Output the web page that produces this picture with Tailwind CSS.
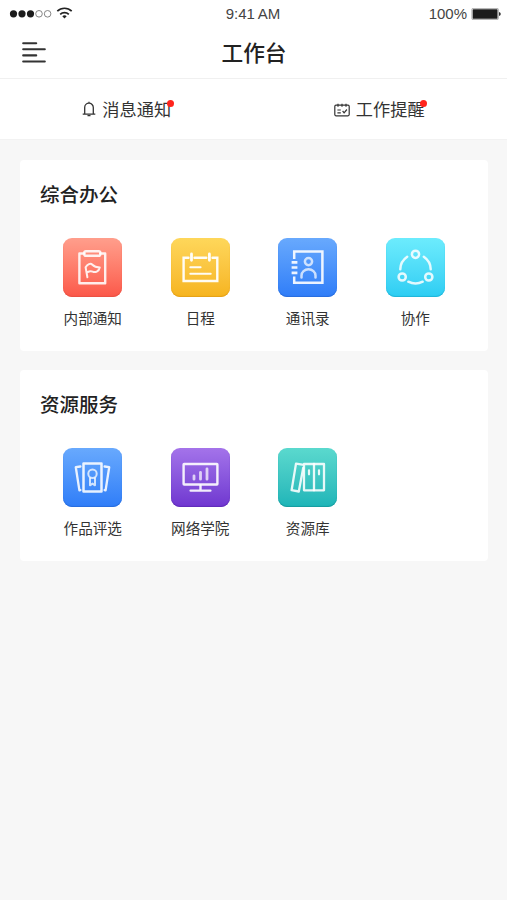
<!DOCTYPE html>
<html lang="zh-CN">
<head>
<meta charset="utf-8">
<meta name="viewport" content="width=device-width, initial-scale=1">
<title>工作台</title>
<script src="https://cdn.jsdelivr.net/npm/@tailwindcss/browser@4"></script>
</head>
<body class="min-h-screen bg-[#f7f7f7] font-['Liberation_Sans','Noto_Sans_CJK_SC',sans-serif] text-[#333]">
<header class="bg-white border-b border-[#f0f0f0] h-[79px]">
  <div class="h-7 grid grid-cols-3 items-center pl-[9px] pr-[6px] text-[15px] leading-7 text-[#444]">
    <div class="flex items-center">
      <svg class="w-[66px] h-4" viewBox="0 0 66 16" fill="none">
        <g fill="#1c1c1c"><circle cx="4.5" cy="7.8" r="3.6"/><circle cx="13" cy="7.8" r="3.6"/><circle cx="21.5" cy="7.8" r="3.6"/></g>
        <g stroke="#777" stroke-width=".9"><circle cx="30" cy="7.8" r="3.3"/><circle cx="38.6" cy="7.8" r="3.3"/></g>
        <g stroke="#222" stroke-width="1.7"><path d="M48.3 5.2a10.3 10.3 0 0 1 14.4 0"/><path d="M51.2 8.4a6.2 6.2 0 0 1 8.6 0"/></g>
        <path d="M53.3 10.3a3.2 3.2 0 0 1 4.4 0L55.5 12.5Z" fill="#222"/>
      </svg>
    </div>
    <div class="text-center tracking-[-0.1px] pr-1">9:41 AM</div>
    <div class="flex items-center justify-end gap-1">
      <span>100%</span>
      <svg class="w-[30px] h-3" viewBox="0 0 30 12"><rect x=".9" y=".4" width="26.4" height="11.2" rx="1" fill="#fff" stroke="#999" stroke-width=".8"/><rect x="1.7" y="1.2" width="24.8" height="9.6" rx=".6" fill="#1c1c1c"/><path d="M28 4.1q1.8.4 1.8 1.9T28 7.9Z" fill="#333"/></svg>
    </div>
  </div>
  <div class="h-[50px] grid grid-cols-[1fr_auto_1fr] items-center pl-[21px] pr-[20px]">
    <svg class="w-6 h-[22px] ml-px" viewBox="0 0 24 22" stroke="#333" stroke-width="2.1" stroke-linecap="round"><path d="M1.2 1.2H14.2M1.2 7.3H22.8M1.2 13.4H14.2M1.2 19.5H22.8"/></svg>
    <h1 class="pt-[2px] text-[21.7px] font-medium leading-[30px] text-[#222]">工作台</h1>
  </div>
</header>

<nav class="bg-white h-[61px] border-b border-[#f2f2f2] grid grid-cols-2 items-center text-[17.2px] leading-6">
  <a class="flex items-center justify-center gap-[6px]">
    <svg class="w-[14px] h-4" viewBox="0 0 14 16" fill="none" stroke="#333" stroke-width="1.3"><path d="M2.7 13V6.5a4.3 4.3 0 0 1 8.6 0V13M.7 13.1H13.3M7 2.1V.7M5.5 14.7h3"/></svg>
    <span class="relative pt-[2px]">消息通知<i class="absolute -right-[3px] top-[4px] size-[7px] rounded-full bg-[#ff241c]"></i></span>
  </a>
  <a class="flex items-center justify-center gap-[6px] pr-[2px]">
    <svg class="w-4 h-[14px] mt-px" viewBox="0 0 16 14" fill="none" stroke="#333" stroke-width="1.2"><rect x=".8" y="2.2" width="14.4" height="10.6" rx="1.2"/><path d="M4 .7v3M8 .7v3M12 .7v3M3.4 7h3.4M3.4 9.8h3.4M8.6 8l1.5 1.8 2.8-3.3"/></svg>
    <span class="relative pt-[2px]">工作提醒<i class="absolute -right-[2px] top-[4px] size-[7px] rounded-full bg-[#ff241c]"></i></span>
  </a>
</nav>

<main class="pl-5 pt-5 pr-[19px] flex flex-col gap-[19px]">
  <section class="bg-white rounded-[4px] h-[191px] px-[19px] pt-5">
    <h2 class="pl-[1px] text-[19.5px] font-medium leading-[30px] text-[#222]">综合办公</h2>
    <div class="grid grid-cols-4 mt-7 text-[14.6px] leading-[22px]">
      <a class="flex flex-col items-center gap-[11px]">
        <span class="size-[59px] rounded-[9px] bg-linear-to-b from-[#ff9e8c] to-[#fb5749] shadow-[inset_0_-1px_1px_#e95243]">
          <svg class="size-full" viewBox="0 0 59 59" fill="none" stroke="#fff" stroke-opacity=".88" stroke-width="2.4" stroke-linejoin="round" stroke-linecap="round"><path d="M21.2 15.5H16.4V45.2H42.2V15.5H37.5"/><rect x="21.3" y="13.2" width="16" height="4.6" rx="1.6"/><path d="M24.4 39.2 22.6 29.2C24.5 26.4 27.4 24.7 29.4 26.8S33.8 29.4 36.8 29.4C36 33.8 32 34.8 29.6 33.6S25.8 33.4 23.6 34.6" stroke-width="2"/></svg>
        </span>内部通知
      </a>
      <a class="flex flex-col items-center gap-[11px]">
        <span class="size-[59px] rounded-[9px] bg-linear-to-b from-[#fed75a] to-[#f6b41d] shadow-[inset_0_-1px_1px_#e5a018]">
          <svg class="size-full" viewBox="0 0 59 59" fill="none" stroke="#fff" stroke-opacity=".95" stroke-width="2.4" stroke-linecap="round"><path d="M17.5 19.8H12.6V43H46.3V19.8H41.5M23.5 19.8H35.3"/><path d="M20.5 16V22.3M38.4 16V22.3" stroke-width="2.8"/><path d="M19.3 29.3H29.6M19.3 35.7H39.7" stroke-width="2"/></svg>
        </span>日程
      </a>
      <a class="flex flex-col items-center gap-[11px]">
        <span class="size-[59px] rounded-[9px] bg-linear-to-b from-[#68a9fd] to-[#2f7df8] shadow-[inset_0_-1px_1px_#286ddd]">
          <svg class="size-full" viewBox="0 0 59 59" fill="none" stroke="#fff" stroke-opacity=".9" stroke-width="2.5"><path d="M16.2 21V13.5H44.4V44.8H16.2V38.5"/><path d="M13.6 24.3H19.4M13.6 29.5H19.4M13.6 34.8H19.4" stroke-width="2.7"/><g stroke-opacity=".72"><circle cx="30.5" cy="23.6" r="3.6"/><path d="M23.5 39.5V37.5a7 6.2 0 0 1 14 0V39.5" stroke-linecap="round"/></g></svg>
        </span>通讯录
      </a>
      <a class="flex flex-col items-center gap-[11px]">
        <span class="size-[59px] rounded-[9px] bg-linear-to-b from-[#6cecfd] to-[#2bcdf3] shadow-[inset_0_-1px_1px_#20b5d8]">
          <svg class="size-full" viewBox="0 0 59 59" fill="none" stroke="#fff" stroke-opacity=".85" stroke-width="2.5" stroke-linecap="round"><circle cx="29.5" cy="16.3" r="3.6"/><circle cx="16.2" cy="39" r="3.6"/><circle cx="42.8" cy="39" r="3.6"/><path d="M21.2 18.8Q14.5 23.4 14.3 31.2M37.8 18.8Q44.5 23.4 44.7 31.2M22.3 43.7Q29.5 47.2 36.7 43.7"/></svg>
        </span>协作
      </a>
    </div>
  </section>

  <section class="bg-white rounded-[4px] h-[191px] px-[19px] pt-5">
    <h2 class="pl-[1px] text-[19.5px] font-medium leading-[30px] text-[#222]">资源服务</h2>
    <div class="grid grid-cols-4 mt-7 text-[14.6px] leading-[22px]">
      <a class="flex flex-col items-center gap-[11px]">
        <span class="size-[59px] rounded-[9px] bg-linear-to-b from-[#68a9fd] to-[#2f7df8] shadow-[inset_0_-1px_1px_#286ddd]">
          <svg class="size-full" viewBox="0 0 59 59" fill="none" stroke="#fff" stroke-opacity=".88" stroke-width="2.3" stroke-linejoin="round" stroke-linecap="round"><rect x="20.5" y="15.5" width="18" height="28" stroke-width="2.5"/><path d="M17.4 18.5 12.8 19.2 16.4 42.3 17.4 42.1M41.6 18.5 46.2 19.2 42.6 42.3 41.6 42.1"/><g stroke-width="2" stroke-opacity=".75"><circle cx="29.5" cy="25.8" r="4.2"/><path d="M27 30.2V37.3L29.5 35.6 32 37.3V30.2"/></g></svg>
        </span>作品评选
      </a>
      <a class="flex flex-col items-center gap-[11px]">
        <span class="size-[59px] rounded-[9px] bg-linear-to-b from-[#a473ea] to-[#7036d0] shadow-[inset_0_-1px_1px_#602cb8]">
          <svg class="size-full" viewBox="0 0 59 59" fill="none" stroke="#fff" stroke-opacity=".9" stroke-width="2.4" stroke-linecap="round"><rect x="12.6" y="16" width="33.8" height="20.5" rx=".5"/><path d="M29.5 37.5V42M19.6 42.6H39.4"/><path d="M23 27.8V31.2M29.5 24.3V31.2M36 20.8V31.2" stroke-width="2.8" stroke-opacity=".72"/></svg>
        </span>网络学院
      </a>
      <a class="flex flex-col items-center gap-[11px]">
        <span class="size-[59px] rounded-[9px] bg-linear-to-b from-[#5ad9ce] to-[#1cb5b8] shadow-[inset_0_-1px_1px_#179c9f]">
          <svg class="size-full" viewBox="0 0 59 59" fill="none" stroke="#fff" stroke-opacity=".88" stroke-width="2.3" stroke-linejoin="round" stroke-linecap="round"><path d="M26 42.3V16H46V42.3Z"/><path d="M36 16V42.3"/><path d="M18 15.6 24.4 16.7M18 15.6 13.6 42.2 20.8 43.5 25.2 20"/><path d="M31 22.3V26.3M41 22.3V26.3" stroke-width="2.2"/></svg>
        </span>资源库
      </a>
    </div>
  </section>
</main>
</body>
</html>
